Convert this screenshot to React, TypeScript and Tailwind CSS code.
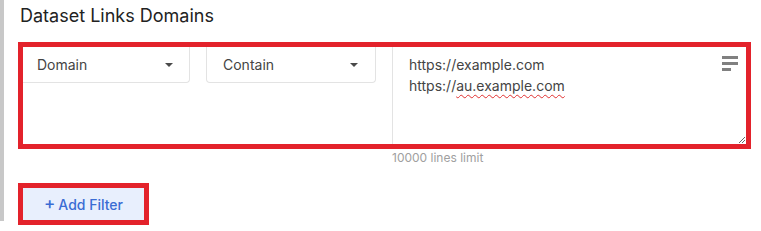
import React from "react";

function Caret() {
  return (
    <svg width="8" height="4" viewBox="0 0 8 4" className="shrink-0">
      <path d="M0 0H8L4 4Z" fill="#4a4a4a" />
    </svg>
  );
}

export default function App() {
  return (
    <div className="w-[761px] h-[231px] bg-white font-['Inter','Liberation_Sans',sans-serif] overflow-hidden">
      <div className="h-[221px] border-l-4 border-[#c8c8c8] pl-[14px] pr-[10px] pt-[4px]">
        <h2 className="text-[18px] leading-6 text-[#222] pl-[2px]">Dataset Links Domains</h2>
        <div className="mt-[14px] h-[107px] border-[5px] border-[#e3222b] flex">
          <div className="w-[167px] h-[36px] border-r border-b border-[#e3e3e3] rounded-br-[4px] flex items-center justify-between pl-[14px] pr-[16px] text-[14px] text-[#444]">
            <span>Domain</span>
            <Caret />
          </div>
          <div className="ml-4 w-[170px] h-[36px] border-x border-b border-[#e3e3e3] rounded-b-[4px] flex items-center justify-between pl-4 pr-[17px] text-[14px] text-[#444]">
            <span>Contain</span>
            <Caret />
          </div>
          <div className="ml-4 flex-1 border-l border-[#e3e3e3] relative pt-[7px] pl-4 text-[14px] leading-[21px] text-[#444]">
            <div>https://example.com</div>
            <div>
              https://
              <span className="underline decoration-wavy decoration-[#e03030] decoration-1 underline-offset-[3px]">
                au.example.com
              </span>
            </div>
            <svg width="16" height="15" viewBox="0 0 16 15" className="absolute top-[9px] right-[8px]">
              <rect x="0" y="0" width="16" height="3" fill="#808080" />
              <rect x="0" y="6" width="16" height="3" fill="#808080" />
              <rect x="0" y="12" width="9" height="3" fill="#808080" />
            </svg>
            <svg width="7" height="7" viewBox="0 0 7 7" className="absolute bottom-[1px] right-[1px]">
              <path d="M1 7L7 1M4 7L7 4" stroke="#666" strokeWidth="1" />
            </svg>
          </div>
        </div>
        <div className="ml-[374px] mt-[1px] text-[12px] leading-4 text-[#a0a0a0]">10000 lines limit</div>
        <button className="mt-[17px] w-[131px] h-[42px] border-[5px] border-[#e3222b] bg-[#e8effd] text-[14px] font-medium text-[#3a6cd4] flex items-center justify-center">
          <span className="text-[17px] leading-none mr-[3px] mb-[1px]">+</span>Add Filter
        </button>
      </div>
    </div>
  );
}
